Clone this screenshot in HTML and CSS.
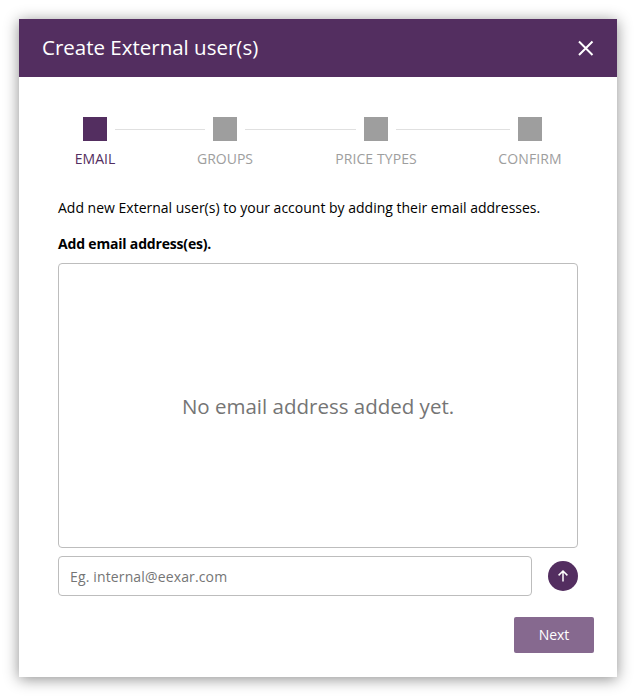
FILE: index.html
```html
<!DOCTYPE html>
<html lang="en">
<head>
<meta charset="utf-8">
<title>Create External user(s)</title>
<link rel="stylesheet" href="styles.css">
</head>
<body>
<div class="modal">
  <header class="modal-header">
    <h1 class="modal-title">Create External user(s)</h1>
    <button class="close-btn" aria-label="Close">
      <svg width="16" height="16" viewBox="0 0 16 16"><path d="M1 1.5L14.5 15M14.5 1.5L1 15" stroke="#fff" stroke-width="2" fill="none"/></svg>
    </button>
  </header>
  <div class="stepper">
    <span class="square active"></span>
    <span class="line"></span>
    <span class="square"></span>
    <span class="line"></span>
    <span class="square"></span>
    <span class="line"></span>
    <span class="square"></span>
    <span class="label label-1 active-label">EMAIL</span>
    <span class="label label-2">GROUPS</span>
    <span class="label label-3">PRICE TYPES</span>
    <span class="label label-4">CONFIRM</span>
  </div>
  <div class="content">
    <p class="intro">Add new External user(s) to your account by adding their email addresses.</p>
    <p class="field-title">Add email address(es).</p>
    <div class="email-box"><span>No email address added yet.</span></div>
    <div class="input-row">
      <input class="email-input" type="text" placeholder="Eg. internal@eexar.com">
      <button class="add-btn" aria-label="Add">
        <svg width="14" height="14" viewBox="0 0 14 14"><path d="M7 12.5V2M2.6 6.4L7 2L11.4 6.4" stroke="#fff" stroke-width="1.5" fill="none"/></svg>
      </button>
    </div>
  </div>
  <footer class="modal-footer">
    <button class="next-btn">Next</button>
  </footer>
</div>
</body>
</html>
```

FILE: styles.css
```css
* { box-sizing: border-box; }
html, body { margin: 0; padding: 0; background: #fff; }
body {
  padding: 19px 19px 19px;
  font-family: "Open Sans", "Liberation Sans", sans-serif;
  height: 696px;
  overflow: hidden;
}
.modal {
  width: 598px;
  height: 658px;
  background: #fff;
  box-shadow: 0 2px 14px rgba(0, 0, 0, 0.45);
}
.modal-header {
  height: 58px;
  background: #532e60;
  display: flex;
  align-items: center;
  justify-content: space-between;
  padding: 0 23px;
}
.modal-title {
  margin: 0;
  color: #fff;
  font-size: 20.5px;
  font-weight: 400;
  line-height: 56px;
  height: 58px;
}
.close-btn {
  display: flex;
  padding: 0;
  border: 0;
  background: none;
}
.stepper {
  display: grid;
  grid-template-columns: 24px 106px 24px 127px 24px 130px 24px;
  grid-template-rows: 24px auto;
  align-items: center;
  margin: 40px 0 0 64px;
}
.square { width: 24px; height: 24px; background: #9e9e9e; }
.square.active { background: #532e60; }
.line { height: 1px; background: #e0e0e0; margin: 0 8px; }
.label {
  grid-row: 2;
  justify-self: center;
  white-space: nowrap;
  margin-top: 8px;
  font-size: 14px;
  line-height: 20px;
  color: #9e9e9e;
}
.label-1 { grid-column: 1; }
.label-2 { grid-column: 3; }
.label-3 { grid-column: 5; letter-spacing: 0.1px; }
.label-4 { grid-column: 7; letter-spacing: 0.1px; }
.active-label { color: #532e60; }
.content { padding: 0 39px; margin-top: 29px; }
.intro {
  margin: 0;
  font-size: 14px;
  line-height: 20px;
  color: #000;
}
.field-title {
  margin: 16px 0 0;
  font-size: 14px;
  line-height: 20px;
  font-weight: 700;
  letter-spacing: -0.18px;
  color: #000;
}
.email-box {
  margin-top: 9px;
  height: 285px;
  border: 1px solid #bdbdbd;
  border-radius: 4px;
  display: flex;
  align-items: center;
  justify-content: center;
  font-size: 20.5px;
  color: #757575;
}
.input-row {
  display: flex;
  align-items: center;
  gap: 16px;
  margin-top: 8px;
}
.email-input {
  width: 474px;
  height: 40px;
  border: 1px solid #bdbdbd;
  border-radius: 4px;
  padding: 0 11px;
  font-family: inherit;
  font-size: 14px;
  letter-spacing: 0.14px;
  color: #424242;
  outline: none;
}
.email-input::placeholder { color: #757575; opacity: 1; }
.add-btn {
  width: 30px;
  height: 30px;
  padding: 0;
  border: 0;
  border-radius: 50%;
  background: #532e60;
  display: flex;
  align-items: center;
  justify-content: center;
}
.modal-footer {
  display: flex;
  justify-content: flex-end;
  padding: 21px 23px 0 0;
}
.next-btn {
  width: 80px;
  height: 36px;
  border: 0;
  border-radius: 2px;
  background: #86698f;
  color: #fff;
  font-family: inherit;
  font-size: 14px;
  padding: 0 0 2px;
}
```
